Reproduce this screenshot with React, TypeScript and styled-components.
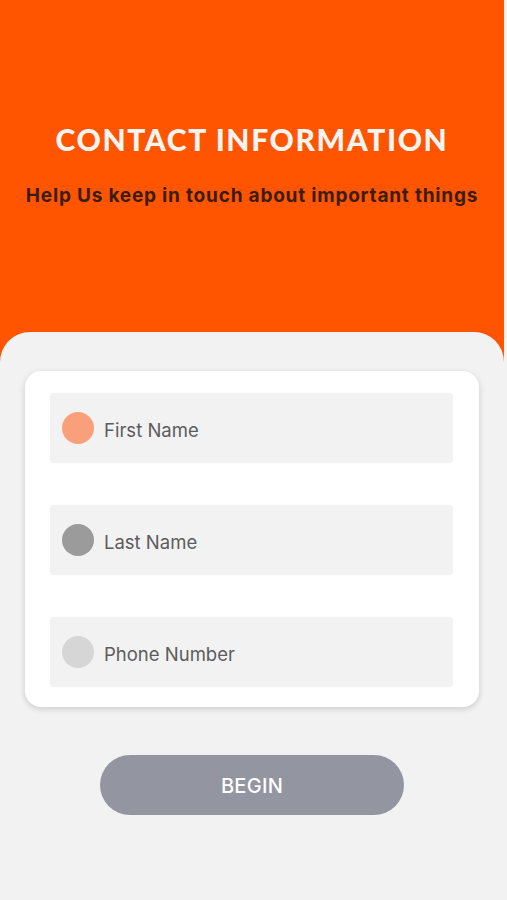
import styled, { createGlobalStyle } from 'styled-components';

const GlobalStyle = createGlobalStyle`
    html, body {
        margin: 0;
        padding: 0;
        background: #f2f2f2;
    }
    body {
        font-family: 'Open Sans', 'Liberation Sans', sans-serif;
    }
`;

const Screen = styled.div`
    width: 504px;
    min-height: 900px;
    display: flex;
    flex-direction: column;
    background: #ff5500;
    overflow: hidden;
`;

const Header = styled.header`
    height: 332px;
    display: flex;
    flex-direction: column;
    align-items: center;
    padding-top: 122px;
    box-sizing: border-box;
`;

const Title = styled.h1`
    margin: 0;
    font-family: Lato, 'Liberation Sans', sans-serif;
    font-weight: 900;
    font-size: 30px;
    line-height: 34px;
    letter-spacing: 1.6px;
    color: #f7f4f2;
`;

const Subtitle = styled.p`
    margin: 28px 0 0;
    font-family: Inter, 'Liberation Sans', sans-serif;
    font-weight: 700;
    font-size: 19px;
    line-height: 24px;
    letter-spacing: 0.8px;
    white-space: nowrap;
    color: #3a1d10;
`;

const Sheet = styled.main`
    flex: 1;
    background: #f2f2f2;
    border-radius: 30px 30px 0 0;
    display: flex;
    flex-direction: column;
    align-items: center;
    padding: 39px 25px 0;
`;

const Card = styled.section`
    width: 100%;
    box-sizing: border-box;
    background: #ffffff;
    border-radius: 16px;
    box-shadow: 0 2px 6px rgba(0, 0, 0, 0.16);
    padding: 22px 26px 20px 25px;
    display: flex;
    flex-direction: column;
    gap: 42px;
`;

const Field = styled.label`
    height: 70px;
    display: flex;
    align-items: center;
    gap: 10px;
    padding: 0 12px;
    background: #f2f2f2;
    border-radius: 4px;
`;

const Dot = styled.span<{ $color: string }>`
    width: 32px;
    height: 32px;
    border-radius: 50%;
    flex: none;
    background: ${({ $color }) => $color};
`;

const Input = styled.input`
    flex: 1;
    border: none;
    outline: none;
    background: transparent;
    font-family: Inter, 'Liberation Sans', sans-serif;
    font-size: 18.5px;
    color: #555;
    padding: 3px 0 0;

    &::placeholder {
        color: #5c5c5c;
    }
`;

const BeginButton = styled.button`
    margin-top: 48px;
    width: 304px;
    height: 60px;
    border: none;
    border-radius: 30px;
    background: #9395a1;
    color: #ffffff;
    font-family: Inter, 'Liberation Sans', sans-serif;
    font-weight: 500;
    font-size: 20px;
    letter-spacing: 0.3px;
    padding-top: 2px;
`;

const fields = [
    { placeholder: 'First Name', color: '#f9a07a' },
    { placeholder: 'Last Name', color: '#9b9b9b' },
    { placeholder: 'Phone Number', color: '#d6d6d6' },
];

export default function App() {
    return (
        <>
            <GlobalStyle />
            <Screen>
                <Header>
                    <Title>CONTACT INFORMATION</Title>
                    <Subtitle>Help Us keep in touch about important things</Subtitle>
                </Header>
                <Sheet>
                    <Card>
                        {fields.map((f) => (
                            <Field key={f.placeholder}>
                                <Dot $color={f.color} />
                                <Input placeholder={f.placeholder} />
                            </Field>
                        ))}
                    </Card>
                    <BeginButton>BEGIN</BeginButton>
                </Sheet>
            </Screen>
        </>
    );
}
